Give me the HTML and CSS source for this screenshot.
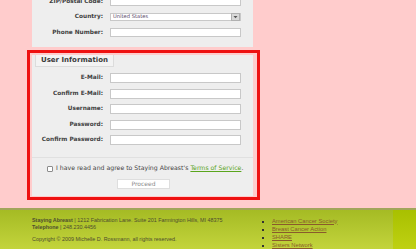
FILE: index.html
```html
<!DOCTYPE html>
<html>
<head>
<meta charset="utf-8">
<link rel="stylesheet" href="styles.css">
</head>
<body>
<div class="page">
  <div class="panel panel-top">
    <div class="rows rows-top">
      <div class="row"><label class="lbl">ZIP/Postal Code:</label><input class="txt" type="text"></div>
      <div class="row"><label class="lbl">Country:</label>
        <div class="select"><span class="select-val">United States</span><span class="select-btn"><svg width="5" height="4" viewBox="0 0 5 4"><path d="M0.5 1 L4.5 1 L2.5 3.2 Z" fill="#555"/></svg></span></div>
      </div>
      <div class="row"><label class="lbl">Phone Number:</label><input class="txt" type="text"></div>
    </div>
  </div>

  <div class="highlight">
    <div class="panel panel-user">
      <div class="legend">User Information</div>
      <div class="rows">
        <div class="row"><label class="lbl">E-Mail:</label><input class="txt" type="text"></div>
        <div class="row"><label class="lbl">Confirm E-Mail:</label><input class="txt" type="text"></div>
        <div class="row"><label class="lbl">Username:</label><input class="txt" type="text"></div>
        <div class="row"><label class="lbl">Password:</label><input class="txt" type="password"></div>
        <div class="row"><label class="lbl">Confirm Password:</label><input class="txt" type="password"></div>
      </div>
      <div class="sep"></div>
      <div class="agree">
        <input class="chk" type="checkbox">
        <span>I have read and agree to Staying Abreast's <a href="#" class="tos">Terms of Service</a>.</span>
      </div>
      <div class="actions"><button class="btn" type="button">Proceed</button></div>
    </div>
  </div>
</div>

<footer class="footer">
  <div class="foot-inner">
    <div class="address">
      <p class="addr-line"><b>Staying Abreast</b> | 1212 Fabrication Lane. Suite 201 Farmington Hills, MI 48375</p>
      <p class="addr-line"><b>Telephone</b> | 248.230.4456</p>
      <p class="copy">Copyright © 2009 Michelle D. Rossmann, all rights reserved.</p>
    </div>
    <ul class="links">
      <li><a href="#">American Cancer Society</a></li>
      <li><a href="#">Breast Cancer Action</a></li>
      <li><a href="#">SHARE</a></li>
      <li><a href="#">Sisters Network</a></li>
    </ul>
  </div>
  <div class="foot-outer"></div>
</footer>
</body>
</html>
```

FILE: styles.css
```css
html, body {
  margin: 0;
  padding: 0;
}
body {
  width: 416px;
  height: 249px;
  overflow: hidden;
  background: #ffcccc;
  font-family: "DejaVu Sans", Verdana, sans-serif;
  color: #444;
}
.page {
  height: 208px;
  padding-left: 27px;
}
.panel {
  background: #eeeeee;
  width: 221px;
  box-sizing: border-box;
}
.panel-top {
  margin-left: 5px;
  height: 47px;
  overflow: hidden;
}
.rows {
  display: flex;
  flex-direction: column;
  gap: 5.5px;
}
.rows-top {
  margin-top: -3px;
  gap: 6.5px;
}
.row {
  display: grid;
  grid-template-columns: 71px 131px;
  column-gap: 7px;
  align-items: center;
  height: 10px;
}
.rows-top .row {
  height: 9px;
}
.lbl {
  font-size: 5.8px;
  font-weight: bold;
  color: #404040;
  text-align: right;
  white-space: nowrap;
  line-height: 1;
}
.txt {
  box-sizing: border-box;
  width: 131px;
  height: 10px;
  margin: 0;
  padding: 0;
  border: 1px solid #c8c8c8;
  background: #fff;
  outline: none;
}
.rows-top .txt {
  height: 9px;
}
.select {
  box-sizing: border-box;
  width: 131px;
  height: 8.5px;
  border: 1px solid #c8c8c8;
  background: #fff;
  display: flex;
  align-items: center;
  justify-content: space-between;
  padding-left: 2px;
}
.select-val {
  font-size: 5.2px;
  color: #5a4a6a;
  line-height: 1;
}
.select-btn {
  width: 7px;
  height: 6.5px;
  background: #d8d8d8;
  border: 0.5px solid #b0b0b0;
  display: flex;
  align-items: center;
  justify-content: center;
  margin-right: 0.5px;
}
.highlight {
  margin-top: 3px;
  width: 233px;
  box-sizing: border-box;
  border: 3px solid #ee1111;
  padding: 2px 4px 1px 2px;
}
.panel-user {
  height: 141px;
}
.legend {
  margin-left: 3px;
  width: 79px;
  height: 12px;
  box-sizing: border-box;
  border: 1px solid #dcdcdc;
  border-top: 0;
  background: #f3f3f3;
  font-size: 7px;
  font-weight: bold;
  color: #3a3a3a;
  line-height: 11px;
  padding-left: 5px;
  white-space: nowrap;
}
.panel-user .rows {
  margin-top: 6px;
}
.sep {
  margin-top: 12px;
  height: 1px;
  background: #e0e0e0;
}
.agree {
  margin-top: 7px;
  padding-left: 15px;
  display: flex;
  align-items: center;
  gap: 3px;
  font-size: 6.2px;
  color: #444;
  white-space: nowrap;
  height: 7px;
  line-height: 1;
}
.chk {
  appearance: none;
  -webkit-appearance: none;
  margin: 0;
  width: 6px;
  height: 6px;
  box-sizing: border-box;
  border: 1px solid #8c8c8c;
  background: #fff;
  border-radius: 1px;
  flex: none;
}
.tos {
  color: #5aa51c;
  text-decoration: underline;
}
.actions {
  margin-top: 7px;
  display: flex;
  justify-content: center;
  padding-left: 2px;
}
.btn {
  width: 53px;
  height: 10px;
  box-sizing: border-box;
  margin: 0;
  padding: 0;
  border: 1px solid #dedede;
  background: #fff;
  font-family: "DejaVu Sans", Verdana, sans-serif;
  font-size: 6px;
  color: #8a8a8a;
  line-height: 1;
}
.footer {
  display: flex;
  height: 41px;
}
.foot-inner {
  width: 393px;
  flex: none;
  display: flex;
  background: linear-gradient(#a5bb24, #c3d43c);
  border-top: 2px solid #a2a55a;
  box-sizing: border-box;
  font-family: "Liberation Sans", Arial, sans-serif;
}
.foot-outer {
  flex: 1;
  background: linear-gradient(#a8c000, #bfd112);
  border-top: 2px solid #a2a55a;
  box-sizing: border-box;
}
.address {
  margin-left: 32px;
  padding-top: 7px;
  width: 228px;
  color: #4d4d2e;
  font-size: 5.4px;
}
.address p {
  margin: 0;
  white-space: nowrap;
}
.addr-line {
  line-height: 7px;
}
.copy {
  margin-top: 5px !important;
  line-height: 7px;
}
.links {
  list-style: square;
  margin: 0;
  padding: 6.5px 0 0 12px;
  font-size: 5.8px;
  line-height: 8px;
  color: #333;
}
.links a {
  color: #8a5a2b;
  text-decoration: underline;
}
```
